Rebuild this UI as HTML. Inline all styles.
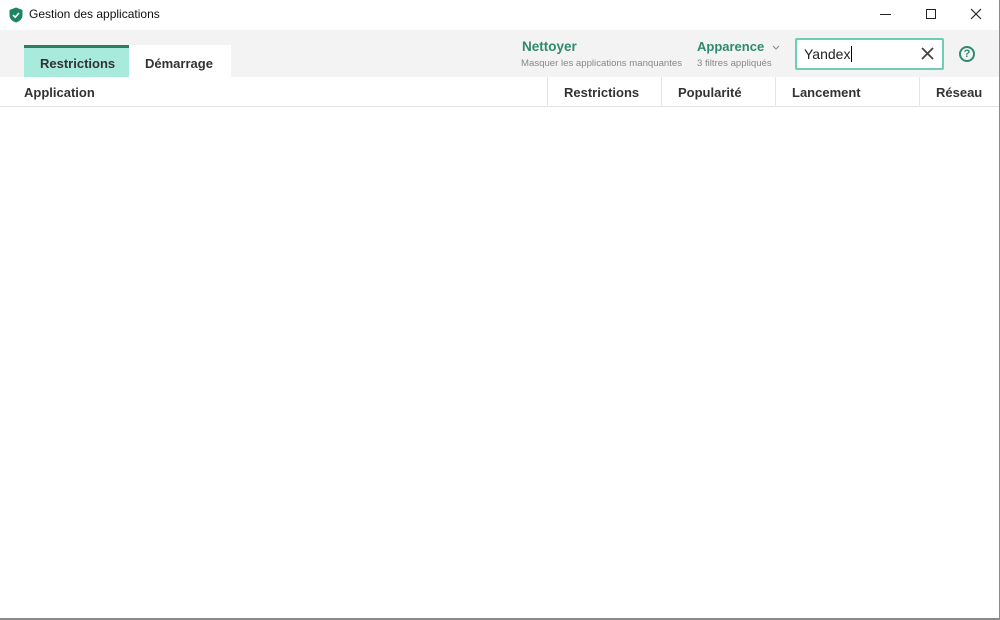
<!DOCTYPE html>
<html><head><meta charset="utf-8"><style>
*{margin:0;padding:0;box-sizing:border-box}
body{width:1000px;height:620px;overflow:hidden;background:#fff;font-family:"Segoe UI","Liberation Sans",sans-serif;position:relative;color:#222}
.abs{position:absolute}
.band{left:0;top:30px;width:999px;height:47px;background:#f3f3f3}
.t{font-size:13px;font-weight:bold;color:#333;white-space:nowrap}
.sep{top:77px;width:1px;height:30px;background:#e4e4e4}
</style></head><body>
<svg class="abs" style="left:9px;top:7px" width="14" height="16" viewBox="0 0 14 16"><path d="M7 0.5 L13.5 3 V8 C13.5 12 10.5 14.5 7 15.5 C3.5 14.5 0.5 12 0.5 8 V3 Z" fill="#1d8566"/><path d="M4 8 L6.2 10.2 L10 6" stroke="#fff" stroke-width="1.6" fill="none"/></svg>
<div class="abs" style="left:29px;top:7px;font-size:12px;color:#111">Gestion des applications</div>
<div class="abs" style="left:880px;top:14px;width:11px;height:1px;background:#222"></div>
<div class="abs" style="left:926px;top:9px;width:10px;height:10px;border:1px solid #222"></div>
<svg class="abs" style="left:970px;top:8px" width="12" height="12"><path d="M1 1L11 11M11 1L1 11" stroke="#222" stroke-width="1.2"/></svg>
<div class="abs band"></div>
<div class="abs" style="left:24px;top:45px;width:105px;height:32px;background:#a8eadc;border-top:3px solid #2d7d66"></div>
<div class="abs t" style="left:40px;top:56px">Restrictions</div>
<div class="abs" style="left:129px;top:45px;width:102px;height:32px;background:#fff"></div>
<div class="abs t" style="left:145px;top:56px">Démarrage</div>
<div class="abs t" style="left:522px;top:39px;color:#2f8a70;font-size:13.5px">Nettoyer</div>
<div class="abs" style="left:521px;top:58px;font-size:9.6px;color:#888;white-space:nowrap">Masquer les applications manquantes</div>
<div class="abs t" style="left:697px;top:39px;color:#2f8a70;font-size:13px">Apparence</div>
<svg class="abs" style="left:772px;top:45px" width="8" height="6"><path d="M1 1L4 4L7 1" stroke="#888" fill="none"/></svg>
<div class="abs" style="left:697px;top:58px;font-size:9.6px;color:#888;white-space:nowrap">3 filtres appliqués</div>
<div class="abs" style="left:795px;top:38px;width:149px;height:32px;border:2px solid #6fcdb3;background:#fff;border-radius:2px"></div>
<div class="abs" style="left:804px;top:46px;font-size:14px;color:#222">Yandex<span style="border-left:1px solid #000;margin-left:1px"></span></div>
<svg class="abs" style="left:921px;top:47px" width="13" height="13"><path d="M1 1L12 12M12 1L1 12" stroke="#444" stroke-width="1.8"/></svg>
<div class="abs" style="left:959px;top:46px;width:16px;height:16px;border:2px solid #2f8a70;border-radius:50%;font-size:11px;font-weight:bold;color:#2f8a70;text-align:center;line-height:12px">?</div>
<div class="abs t" style="left:24px;top:85px">Application</div>
<div class="abs sep" style="left:547px"></div><div class="abs t" style="left:564px;top:85px">Restrictions</div>
<div class="abs sep" style="left:661px"></div><div class="abs t" style="left:678px;top:85px">Popularité</div>
<div class="abs sep" style="left:775px"></div><div class="abs t" style="left:792px;top:85px">Lancement</div>
<div class="abs sep" style="left:919px"></div><div class="abs t" style="left:936px;top:85px">Réseau</div>
<div class="abs" style="left:0;top:106px;width:999px;height:1px;background:#e4e4e4"></div>
<div class="abs" style="left:999px;top:0;width:1px;height:620px;background:#8a8a8a"></div>
<div class="abs" style="left:0;top:618px;width:1000px;height:2px;background:#8a8a8a"></div>
</body></html>
